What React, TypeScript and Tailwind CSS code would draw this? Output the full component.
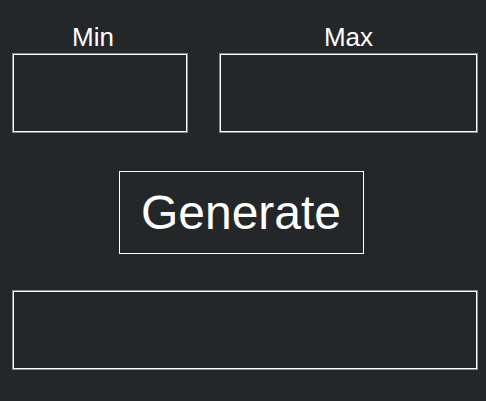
export default function App() {
  return (
    <div className="min-h-[401px] w-full bg-[#23272a] text-white font-['Liberation_Sans',Arial,sans-serif]">
      <div className="flex flex-col pl-[13px] pt-[20px]">
        {/* Min / Max inputs */}
        <div className="flex gap-[33px]">
          <div className="flex flex-col">
            <label className="pl-[59px] text-[26px] leading-[34px]">Min</label>
            <input
              type="text"
              className="w-[174px] h-[78px] bg-transparent border border-white shadow-[0_0_0_1px_#8a8a8a] outline-none"
            />
          </div>
          <div className="flex flex-col">
            <label className="text-center text-[26px] leading-[34px]">Max</label>
            <input
              type="text"
              className="w-[257px] h-[78px] bg-transparent border border-white shadow-[0_0_0_1px_#8a8a8a] outline-none"
            />
          </div>
        </div>

        {/* Generate */}
        <div className="flex justify-center pr-[17px] mt-[39px]">
          <button className="w-[245px] h-[83px] border border-white text-[48px] leading-none">
            Generate
          </button>
        </div>

        {/* Result */}
        <div className="mt-[37px] w-[464px] h-[78px] border border-white shadow-[0_0_0_1px_#8a8a8a]" />
      </div>
    </div>
  );
}
